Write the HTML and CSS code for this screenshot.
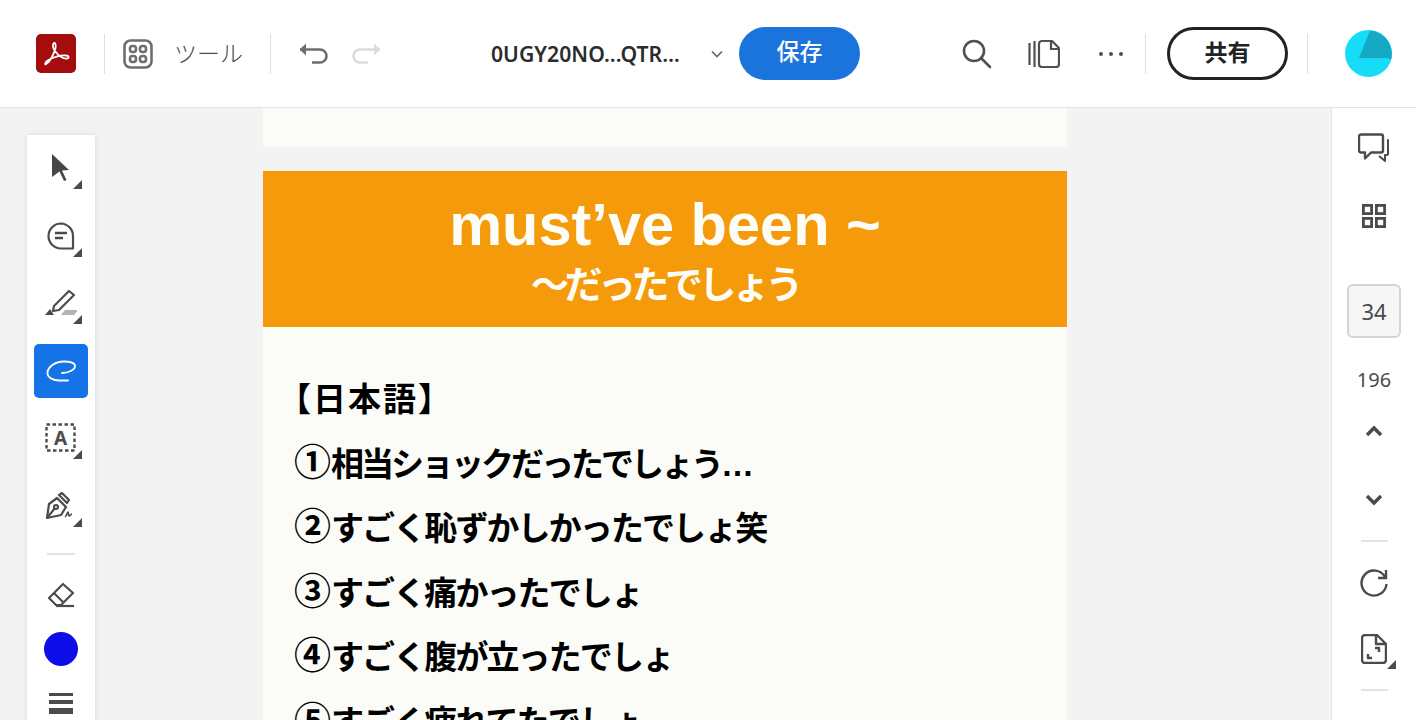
FILE: index.html
```html
<!DOCTYPE html>
<html lang="ja">
<head>
<meta charset="utf-8">
<title>Acrobat</title>
<link rel="stylesheet" href="styles.css">
</head>
<body>
<header class="topbar">
	<div class="logo">
		<svg viewBox="0 0 40 40" width="40" height="40"><path d="M10 30C14 28 18 20 19.500 14 20.500 10 18.500 8 17.500 9.500 16.500 11 17 14 19 17 22 21 27 25 31 24.500 33.500 24 33 21.500 30 21.500 25 21 16 23 11 27 8.500 29 9 31.500 10 30z" fill="none" stroke="#fff" stroke-width="1.800" stroke-linejoin="round"/></svg>
	</div>
	<span class="vline first"></span>
	<svg class="tools-icon" viewBox="0 0 30 30" width="30" height="30" fill="none" stroke="#6e6e6e" stroke-width="2.600"><rect x="1.500" y="1.500" width="27" height="27" rx="6"/><rect x="7" y="7" width="6" height="6" rx="2.500"/><rect x="17" y="7" width="6" height="6" rx="2.500"/><rect x="7" y="17" width="6" height="6" rx="2.500"/><rect x="17" y="17" width="6" height="6" rx="2.500"/></svg>
	<span class="tools-label">ツール</span>
	<span class="vline second"></span>
	<svg class="undo" viewBox="0 0 30 22" width="30" height="22" fill="none" stroke="#6e6e6e" stroke-width="2.600"><path d="M2 6.500h20a6 6 0 0 1 0 13h-8"/><path d="M8 1 2 6.500 8 12" fill="#6e6e6e" stroke-width="1"/></svg>
	<svg class="redo" viewBox="0 0 30 22" width="30" height="22" fill="none" stroke="#dcdcdc" stroke-width="2.600"><path d="M28 6.500H8a6 6 0 0 0 0 13h8"/><path d="M22 1l6 5.500-6 5.500" fill="#dcdcdc" stroke-width="1"/></svg>
	<span class="filename">0UGY20NO...QTR…</span>
	<svg class="chevron" viewBox="0 0 12 8" width="12" height="8" fill="none" stroke="#666" stroke-width="1.600"><path d="M1 1.500 6 6.500 11 1.500"/></svg>
	<button class="save">保存</button>
	<svg class="search" viewBox="0 0 30 30" width="30" height="30" fill="none" stroke="#505050" stroke-width="2.600"><circle cx="12" cy="12" r="10"/><path d="M19 19 28 28" stroke-linecap="round"/></svg>
	<svg class="pages" viewBox="0 0 32 28" width="32" height="28" fill="none" stroke="#505050" stroke-width="2.200"><path d="M1.500 3v22M6.500 1v26"/><path d="M14 1h10l7 7v16a3 3 0 0 1-3 3H14a3 3 0 0 1-3-3V4a3 3 0 0 1 3-3z"/><path d="M23 1v8h8"/></svg>
	<span class="dots"><i></i><i></i><i></i></span>
	<span class="vline third"></span>
	<button class="share">共有</button>
	<span class="vline fourth"></span>
	<svg class="avatar" viewBox="0 0 47 47" width="47" height="47"><circle cx="23.500" cy="23.500" r="23.500" fill="#17dcf7"/><path d="M25 0.500A23.500 23.500 0 0 1 46 30L43 28H14z" fill="#17a9c4"/></svg>
</header>

<div class="workspace">
	<nav class="toolbox">
		<div class="tool corner">
			<svg viewBox="0 0 20 28" width="20" height="28" fill="#474747"><path d="M1 0 18 16 11 16.500 15.500 26 13 27 8.500 17.500 1 23z"/></svg>
		</div>
		<div class="tool corner">
			<svg viewBox="0 0 28 28" width="28" height="28" fill="none" stroke="#4b4b4b" stroke-width="2.200"><path d="M14 1.500A12.500 12.500 0 1 0 14 26.500H26V14A12.500 12.500 0 0 0 14 1.500z" stroke-linejoin="round"/><path d="M8 11h12M8 16h8" stroke-width="2.400"/></svg>
		</div>
		<div class="tool corner">
			<svg viewBox="0 0 32 28" width="32" height="28" fill="none" stroke="#4b4b4b" stroke-width="2.200"><path d="M9 17 24 2l5 4-15 15-6 1z" stroke-linejoin="round"/><path d="M0 26 5 20l4 6z" fill="#4b4b4b" stroke="none"/><path d="M16 26l4-5h13l-4 5z" fill="#b3b3b3" stroke="none"/></svg>
		</div>
		<div class="tool active">
			<svg viewBox="0 0 31 22" width="31" height="22" fill="none" stroke="#fff" stroke-width="1.800" stroke-linecap="round"><path d="M16 13C22 13 29 10 29 6 29 2 23 1.500 18 1.500 9 1.500 1.500 7 1.500 13 1.500 18 8 20.500 13 20.500 16 20.500 19 20.500 22 20.500"/></svg>
		</div>
		<div class="tool corner">
			<svg viewBox="0 0 32 30" width="32" height="30" fill="none" stroke="#4b4b4b" stroke-width="2.400" stroke-dasharray="3.500 2.500"><rect x="1.500" y="1.500" width="28" height="26"/><text class="box-a" x="15.500" y="22" text-anchor="middle">A</text></svg>
		</div>
		<div class="tool corner">
			<svg viewBox="0 0 32 28" width="32" height="28" fill="none" stroke="#4b4b4b" stroke-width="2.200" stroke-linejoin="round"><path d="M2 26 4 12 12 6l9 9-5 8z"/><path d="M2 26 10 16"/><circle cx="11" cy="15" r="2"/><path d="M14 3l3-2 7 7-2 3z"/><path d="M20 25c2-1 2-5 3-5s0 4 1 4 2-2 3-2" stroke-width="1.600"/></svg>
		</div>
		<hr class="tool-sep">
		<div class="tool plain">
			<svg viewBox="0 0 28 26" width="28" height="26" fill="none" stroke="#4b4b4b" stroke-width="2.200" stroke-linejoin="round"><path d="M2 16 16 2l10 9-12 12H9z"/><path d="M7 11l9 9"/><path d="M9 24h18"/></svg>
		</div>
		<div class="tool plain"><span class="swatch"></span></div>
		<div class="tool plain lines"><i></i><i></i><i></i></div>
	</nav>

	<main class="doc">
		<div class="page-end"></div>
		<section class="page">
			<div class="banner">
				<h1>must’ve been ~</h1>
				<h2>〜だったでしょう</h2>
			</div>
			<div class="lines-text">
				<p class="head">【日本語】</p>
				<p class="tight"><span class="num">①</span>相当ショックだったでしょう<span class="ell">…</span></p>
				<p><span class="num">②</span>すごく恥ずかしかったでしょ笑</p>
				<p><span class="num">③</span>すごく痛かったでしょ</p>
				<p><span class="num">④</span>すごく腹が立ったでしょ</p>
				<p><span class="num">⑤</span>すごく疲れてたでしょ</p>
			</div>
		</section>
	</main>

	<aside class="rail">
		<div class="rail-item comments">
			<svg viewBox="0 0 32 30" width="32" height="30" fill="none" stroke="#4b4b4b" stroke-width="2.400" stroke-linejoin="round"><path d="M3 1.500h20a2 2 0 0 1 2 2v14a2 2 0 0 1-2 2H13l-6 6v-6H3a2 2 0 0 1-2-2v-14a2 2 0 0 1 2-2z"/><path d="M29 7h1v14a1 1 0 0 1-1 1h-2v6l-6-5" stroke-width="2"/></svg>
		</div>
		<div class="rail-item grid-icon">
			<svg viewBox="0 0 24 24" width="24" height="24" fill="none" stroke="#4b4b4b" stroke-width="2.800"><rect x="1.400" y="1.400" width="8.200" height="8.200"/><rect x="14.400" y="1.400" width="8.200" height="8.200"/><rect x="1.400" y="14.400" width="8.200" height="8.200"/><rect x="14.400" y="14.400" width="8.200" height="8.200"/></svg>
		</div>
		<div class="page-box">34</div>
		<div class="page-total">196</div>
		<div class="rail-item up">
			<svg viewBox="0 0 18 12" width="18" height="12" fill="none" stroke="#4b4b4b" stroke-width="3.400"><path d="M2 10 9 3l7 7"/></svg>
		</div>
		<div class="rail-item down">
			<svg viewBox="0 0 18 12" width="18" height="12" fill="none" stroke="#4b4b4b" stroke-width="3.400"><path d="M2 2l7 7 7-7"/></svg>
		</div>
		<hr class="rail-sep">
		<div class="rail-item rotate">
			<svg viewBox="0 0 28 28" width="28" height="28" fill="none" stroke="#4b4b4b" stroke-width="2.400"><path d="M25 8A12.500 12.500 0 1 0 26.500 15"/><path d="M26 1v8h-8"/></svg>
		</div>
		<div class="rail-item corner doc-size">
			<svg viewBox="0 0 26 30" width="26" height="30" fill="none" stroke="#4b4b4b" stroke-width="2.400" stroke-linejoin="round"><path d="M4 1h12l9 9v16a3 3 0 0 1-3 3H4a3 3 0 0 1-3-3V4a3 3 0 0 1 3-3z"/><path d="M15 1v9h10"/><path d="M14 14h4v4M11 24H7v-4" stroke-width="2.400"/></svg>
		</div>
		<hr class="rail-sep">
	</aside>
</div>
</body>
</html>
```
FILE: styles.css
```css
html, body {
	margin: 0;
	padding: 0;
	height: 720px;
	overflow: hidden;
}
body {
	background: #f3f3f3;
	font-family: "Noto Sans", "Noto Sans CJK JP", sans-serif;
	color: #2c2c2c;
}

/* top bar */
.topbar {
	display: flex;
	align-items: center;
	height: 107px;
	box-sizing: content-box;
	background: #fff;
	border-bottom: 1px solid #e4e4e4;
}
.logo {
	display: flex;
	align-items: center;
	justify-content: center;
	width: 40px;
	height: 39px;
	margin-left: 36px;
	border-radius: 5px;
	background: #a50c0c;
}
.vline {
	width: 1px;
	height: 40px;
	background: #dedede;
}
.vline.first { margin-left: 28px; }
.tools-icon { margin-left: 18px; }
.tools-label {
	margin-left: 21px;
	margin-bottom: 4px;
	width: 69px;
	font-size: 23px;
	font-family: "Noto Sans CJK JP", sans-serif;
	font-weight: 300;
	color: #4b4b4b;
}
.vline.second { margin-left: 27px; }
.undo { margin-left: 27px; }
.redo { margin-left: 24px; }
.filename {
	margin-left: 109px;
	width: 190px;
	font-size: 21.200px;
	font-weight: 600;
	white-space: nowrap;
}
.chevron { margin-left: 30px; }
.save, .share {
	width: 121px;
	height: 53px;
	padding: 0;
	border-radius: 27px;
	font-family: "Noto Sans CJK JP", sans-serif;
	font-size: 23px;
}
.save {
	margin-left: 16px;
	padding-bottom: 8px;
	border: 0;
	background: #1b73dc;
	color: #fff;
	font-weight: 500;
}
.search { margin-left: 102px; }
.pages { margin-left: 36px; }
.dots {
	display: flex;
	gap: 6px;
	margin-left: 39px;
}
.dots i {
	width: 4px;
	height: 4px;
	border-radius: 50%;
	background: #505050;
}
.vline.third { margin-left: 22px; }
.share {
	margin-left: 21px;
	padding-bottom: 5px;
	border: 3px solid #222;
	background: #fff;
	color: #222;
	font-weight: 700;
}
.vline.fourth { margin-left: 19px; }
.avatar { margin-left: 37px; }

/* working area */
.workspace {
	display: flex;
	align-items: flex-start;
	height: 612px;
	overflow: hidden;
}

.toolbox {
	flex: none;
	width: 68px;
	height: 600px;
	margin: 27px 0 0 27px;
	padding-top: 6px;
	display: flex;
	flex-direction: column;
	align-items: center;
	background: #fff;
	box-shadow: 0 0 5px rgba(0, 0, 0, 0.12);
}
.tool {
	position: relative;
	flex: none;
	display: flex;
	align-items: center;
	justify-content: center;
	width: 54px;
	height: 54px;
	margin-bottom: 13.500px;
	border-radius: 5px;
}
.tool.active { background: #1473e6; }
.corner::after {
	content: "";
	position: absolute;
	right: 6px;
	bottom: 6px;
	border-style: solid;
	border-width: 0 0 9px 9px;
	border-color: transparent transparent #4b4b4b transparent;
}
.box-a {
	font: 700 19px "Noto Sans", sans-serif;
	fill: #4b4b4b;
	stroke: none;
}
.tool-sep {
	flex: none;
	width: 28px;
	height: 2px;
	margin: 7px 0 20px;
	border: 0;
	background: #e3e3e3;
}
.tool.plain {
	height: 40px;
	margin-bottom: 14px;
}
.swatch {
	width: 34px;
	height: 34px;
	border-radius: 50%;
	background: #0d0de8;
}
.lines {
	flex-direction: column;
	gap: 4px;
}
.lines i {
	display: block;
	width: 24px;
	background: #4b4b4b;
}
.lines i:nth-child(1) { height: 3px; }
.lines i:nth-child(2) { height: 4px; }
.lines i:nth-child(3) { height: 6px; }

/* document */
.doc {
	flex: none;
	width: 804px;
	margin-left: 168px;
}
.page-end {
	height: 39px;
	background: #fbfbf7;
}
.page {
	margin-top: 24px;
	background: #fbfbf7;
	height: 600px;
}
.banner {
	height: 156px;
	background: #f59a0a;
	color: #fdfdf8;
	text-align: center;
	overflow: hidden;
}
.banner h1 {
	margin: 17px 0 0;
	font: 700 59.500px/74px "Liberation Sans", sans-serif;
}
.banner h2 {
	margin: -5px 0 0;
	font: 700 38px/50px "Noto Sans CJK JP", sans-serif;
	letter-spacing: -4.500px;
}
.lines-text {
	padding: 38px 0 0 30px;
}
.lines-text p {
	margin: 0;
	height: 64.500px;
	font: 700 33px/64.500px "Noto Sans CJK JP", sans-serif;
	letter-spacing: -1.900px;
	color: #000;
	white-space: nowrap;
}
.lines-text p.head {
	margin-left: -15px;
	letter-spacing: 2px;
}
.lines-text p.tight { letter-spacing: -3px; }
.num {
	font-size: 37px;
	line-height: 0;
	letter-spacing: 0;
	margin-left: 1px;
}
.ell {
	font-family: "Liberation Sans", sans-serif;
	letter-spacing: 0;
}

/* right rail */
.rail {
	flex: none;
	width: 84px;
	height: 612px;
	margin-left: auto;
	display: flex;
	flex-direction: column;
	align-items: center;
	background: #fff;
	border-left: 1px solid #e4e4e4;
}
.rail-item {
	position: relative;
	display: flex;
	align-items: center;
	justify-content: center;
	width: 54px;
	height: 40px;
	flex: none;
}
.comments { margin-top: 20px; }
.grid-icon { margin-top: 28px; }
.page-box {
	flex: none;
	box-sizing: border-box;
	width: 54px;
	height: 54px;
	margin-top: 47.500px;
	border: 2px solid #d4d4d4;
	border-radius: 6px;
	background: #f6f6f6;
	font-size: 22px;
	line-height: 50px;
	text-align: center;
	color: #4b4b4b;
}
.page-total {
	margin-top: 27px;
	font-size: 20px;
	line-height: 30px;
	color: #4b4b4b;
}
.up { margin-top: 16px; }
.down { margin-top: 29px; }
.rail-sep {
	flex: none;
	width: 27px;
	height: 2px;
	margin: 20px 0 0;
	border: 0;
	background: #e3e3e3;
}
.rotate { margin-top: 21px; }
.doc-size { margin-top: 26px; }
.doc-size::after {
	right: 5px;
	bottom: 0;
}
```
